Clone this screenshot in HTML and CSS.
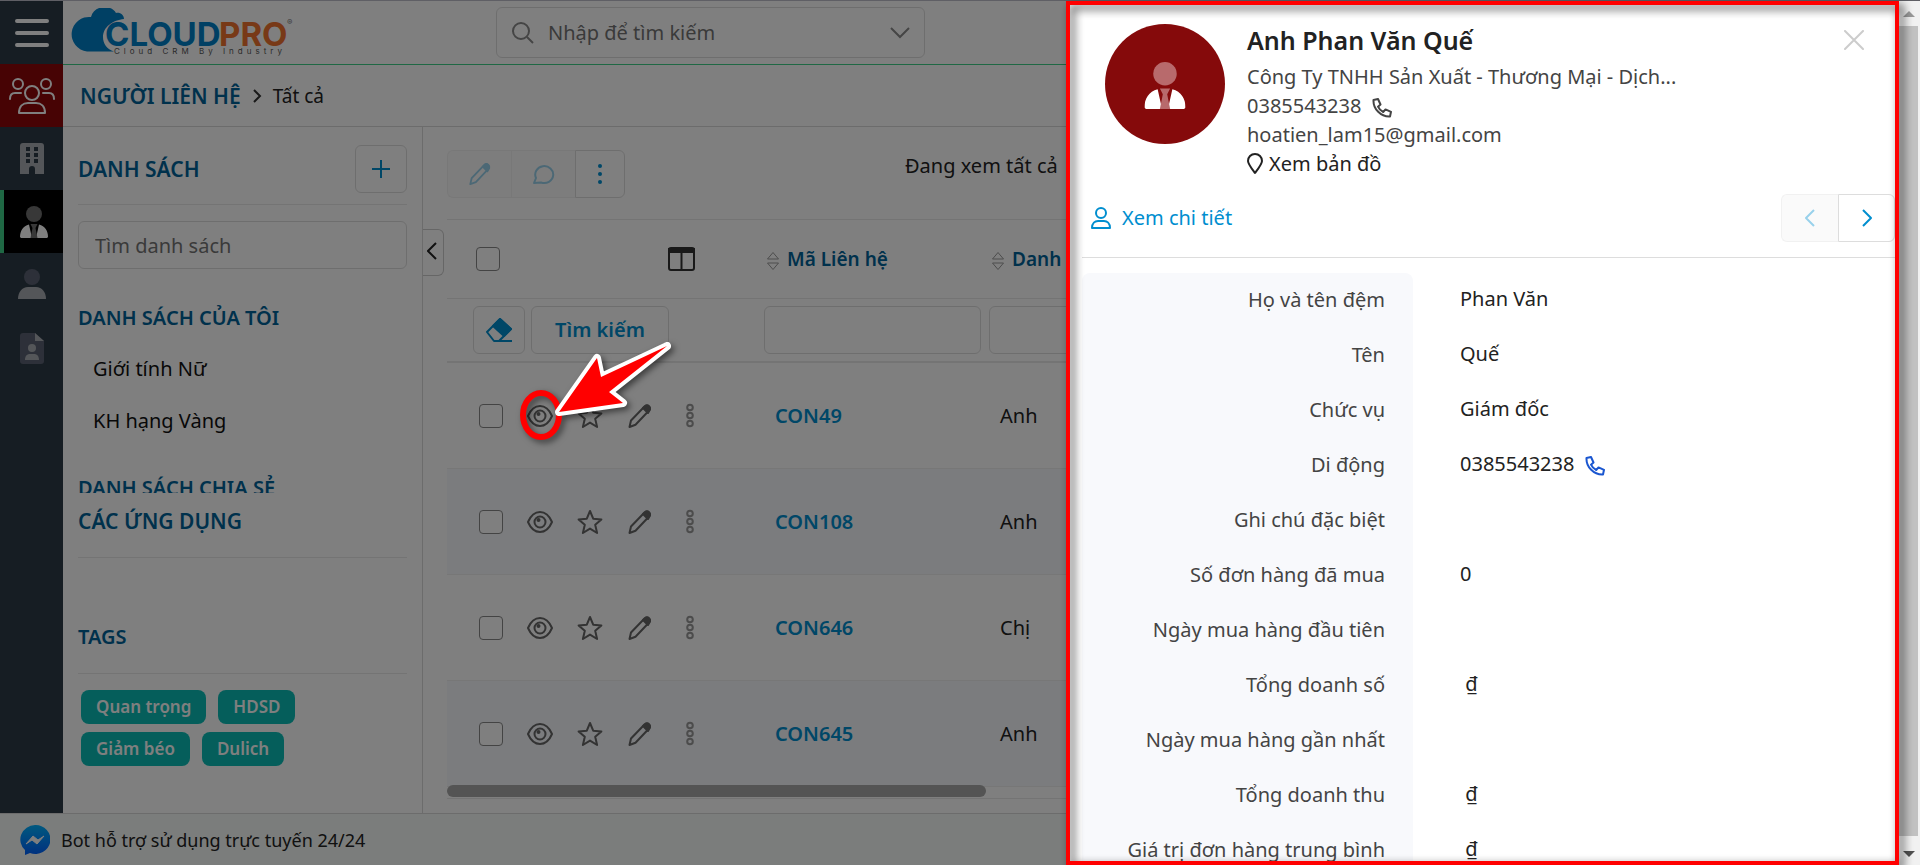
FILE: index.html
```html
<!DOCTYPE html>
<html lang="vi">
<head>
  <meta charset="UTF-8">
  <meta name="viewport" content="width=device-width, initial-scale=1.0">
  <title>CloudPro CRM - Người liên hệ</title>
  <link rel="stylesheet" href="styles.css">
</head>
<body>
  <!-- icons -->
  <svg class="sprite" aria-hidden="true">
    <symbol id="i-eye" viewBox="0 0 26 26">
      <path d="M1 13C4 6 8 3 13 3s9 3 12 10c-3 7-7 10-12 10S4 20 1 13z"/>
      <circle cx="13" cy="13" r="5.5"/>
      <circle cx="11.500" cy="11" r="2" fill="currentColor" stroke="none"/>
    </symbol>
    <symbol id="i-star" viewBox="0 0 26 26">
      <path d="M13 2l3.2 7.7 8.2.7-6.2 5.4 1.9 8.2-7.1-4.4L5.900 24l1.900-8.200L1.600 10.400l8.200-.7z"/>
    </symbol>
    <symbol id="i-pencil" viewBox="0 0 26 26">
      <path d="M2.500 24l1.500-6.500L17.500 3.500c1.500-1.500 3.200-1.500 4.500-.3s1.300 3-.2 4.600L8.500 21.800z"/>
      <path d="M16 5l5 5 2-3.500c.5-2-1.500-4.500-4-4z" fill="currentColor"/>
    </symbol>
    <symbol id="i-dots" viewBox="0 0 26 26">
      <circle cx="13" cy="4.500" r="2.800"/><circle cx="13" cy="12.500" r="2.800"/><circle cx="13" cy="20.500" r="2.800"/>
    </symbol>
    <symbol id="i-sort" viewBox="0 0 14 20">
      <path d="M7 1.500L12.500 8h-11zM7 18.500L12.500 12h-11z"/>
    </symbol>
    <symbol id="i-phone" viewBox="0 0 20 20">
      <path d="M1.500 2L6 1l2.500 5.500-2.500 2.200c1 2.200 2.800 4.200 5.200 5.300l2.300-2.600 5.500 2.400-1 4.700C9 19 1 11 1.500 2z"/>
    </symbol>
    <symbol id="i-suit" viewBox="0 0 28 32">
      <circle cx="14" cy="8" r="8" fill="var(--head)"/>
      <path d="M0 31c0-6 3-11 9-12.500L12 32H1zM28 31c0-6-3-11-9-12.500L16 32h11z" fill="#fff"/>
      <path d="M10.500 18h7l-2 4 2 10h-7l2-10z" fill="var(--head)"/>
    </symbol>
  </svg>

  <div class="app">
    <div class="workspace">
      <nav class="rail">
        <button class="rail-item" aria-label="Menu">
          <svg width="36" height="30" fill="none" stroke="#fff" stroke-width="4" stroke-linecap="round"><path d="M3 3h30M3 15h30M3 27h30"/></svg>
        </button>
        <a class="rail-item rail-red" href="#" aria-label="Khách hàng">
          <svg width="46" height="38" fill="none" stroke="#fff" stroke-width="2" stroke-linecap="round" stroke-linejoin="round">
            <circle cx="9" cy="7" r="5"/><circle cx="37" cy="7" r="5"/><circle cx="23" cy="16" r="7"/>
            <path d="M1 22c0-4 2-6 5-6h6M45 22c0-4-2-6-5-6h-6M10 36c0-7 4-10 9-10h8c5 0 9 3 9 10z"/>
          </svg>
        </a>
        <a class="rail-item" href="#" aria-label="Công ty">
          <svg width="24" height="32">
            <path d="M3 0h18a3 3 0 0 1 3 3v28h-9v-5a3 3 0 0 0-6 0v5H0V3a3 3 0 0 1 3-3z" fill="#a9adb2"/>
            <path d="M6 4h4v4H6zM14 4h4v4h-4zM6 10h4v4H6zM14 10h4v4h-4zM6 16h4v4H6zM14 16h4v4h-4z" fill="#2c3a46"/>
          </svg>
        </a>
        <a class="rail-item rail-active" href="#" aria-label="Người liên hệ">
          <svg width="28" height="32"><use href="#i-suit"/></svg>
        </a>
        <a class="rail-item" href="#" aria-label="Cá nhân">
          <svg width="28" height="32">
            <circle cx="14" cy="8" r="8" fill="#5a6172"/>
            <path d="M0 30c0-7 4-12 10-12h8c6 0 10 5 10 12z" fill="#a9adb2"/>
          </svg>
        </a>
        <a class="rail-item" href="#" aria-label="Hồ sơ">
          <svg width="24" height="32">
            <path d="M3 1h12l9 8v20a3 3 0 0 1-3 3H3a3 3 0 0 1-3-3V4a3 3 0 0 1 3-3z" fill="#5a6172"/>
            <path d="M15 1l9 8h-9zM5 28c0-4 2-6 5-6h4c3 0 5 2 5 6z" fill="#a9adb2"/>
            <circle cx="12" cy="16" r="4" fill="#a9adb2"/>
          </svg>
        </a>
      </nav>

      <div class="content">
        <header class="topbar">
          <a class="logo" href="#" aria-label="CloudPro">
            <svg width="225" height="50" viewBox="0 0 225 50">
              <path d="M17 43.500A17 17 0 1 1 21 9C24-3 41-4 46 5c4-1 8 2 8 6C43 12 33 19 33 29c0 7 4 12 11 14.500z" fill="#0080c8"/>
              <text x="35" y="38" font-size="33" font-weight="700" fill="#0080c8">CLOUD</text>
              <text x="149" y="38" font-size="33" font-weight="700" fill="#f0722e">PRO</text>
              <text x="217" y="17" font-size="8" fill="#777">®</text>
              <text class="slogan" x="44" y="46" font-size="8" fill="#555">Cloud CRM By Industry</text>
            </svg>
          </a>
          <label class="search">
            <svg width="24" height="24" fill="none" stroke="#8a8a8a" stroke-width="2"><circle cx="10" cy="10" r="8"/><path d="M16 16l6 6"/></svg>
            <input type="text" placeholder="Nhập để tìm kiếm" aria-label="Tìm kiếm">
            <svg width="20" height="12" fill="none" stroke="#8a8a8a" stroke-width="2"><path d="M1 1l9 9 9-9"/></svg>
          </label>
        </header>

        <div class="crumbs">
          <a class="crumb-module" href="#">NGƯỜI LIÊN HỆ</a>
          <svg width="10" height="14" fill="none" stroke="#333" stroke-width="2"><path d="M2 1l6 6-6 6"/></svg>
          <span>Tất cả</span>
        </div>

        <div class="columns">
          <aside class="lists">
            <div class="lists-head">
              <h2>DANH SÁCH</h2>
              <button class="btn btn-icon" aria-label="Thêm danh sách">
                <svg width="18" height="18" fill="none" stroke="#008ecf" stroke-width="2"><path d="M9 0v18M0 9h18"/></svg>
              </button>
            </div>
            <input class="field" type="text" placeholder="Tìm danh sách" aria-label="Tìm danh sách">
            <div class="lists-scroll">
              <h3>DANH SÁCH CỦA TÔI</h3>
              <a href="#">Giới tính Nữ</a>
              <a href="#">KH hạng Vàng</a>
              <h3>DANH SÁCH CHIA SẺ</h3>
            </div>
            <h2 class="block-title apps-title">CÁC ỨNG DỤNG</h2>
            <h2 class="block-title tags-title">TAGS</h2>
            <div class="tags">
              <span class="tag">Quan trọng</span>
              <span class="tag">HDSD</span>
              <span class="tag">Giảm béo</span>
              <span class="tag">Dulich</span>
            </div>
          </aside>

          <main class="main">
            <button class="collapse" aria-label="Thu gọn">
              <svg width="10" height="18" fill="none" stroke="#222" stroke-width="2"><path d="M9 1L1 9l8 8"/></svg>
            </button>
            <div class="toolbar">
              <div class="btn-group">
                <button class="btn off" disabled aria-label="Sửa"><svg class="ico" width="24" height="24" viewBox="0 0 26 26"><use href="#i-pencil"/></svg></button>
                <button class="btn off" disabled aria-label="Bình luận">
                  <svg class="ico" width="24" height="22"><path d="M2 20l2-5a9 8.500 0 1 1 5 4.500L2 20z"/></svg>
                </button>
                <button class="btn more" aria-label="Thêm">
                  <svg width="4" height="20" fill="#008ecf"><circle cx="2" cy="2" r="2"/><circle cx="2" cy="10" r="2"/><circle cx="2" cy="18" r="2"/></svg>
                </button>
              </div>
              <p class="summary">Đang xem tất cả</p>
            </div>

            <table class="grid">
              <thead>
                <tr>
                  <th class="col-tools">
                    <div class="head-tools">
                      <input class="check" type="checkbox" aria-label="Chọn tất cả">
                      <svg width="27" height="24" fill="none" stroke="#333" stroke-width="2"><rect x="1" y="1" width="25" height="22" rx="2"/><path d="M13.500 3v20"/><path d="M1 2h25v3H1z" fill="#333"/></svg>
                    </div>
                  </th>
                  <th class="col-data"><svg class="sort" width="14" height="20"><use href="#i-sort"/></svg>Mã Liên hệ</th>
                  <th><svg class="sort" width="14" height="20"><use href="#i-sort"/></svg>Danh xưng</th>
                </tr>
                <tr class="filter">
                  <td>
                    <div class="filter-tools">
                      <button class="btn" aria-label="Xóa lọc">
                        <svg width="28" height="26" fill="none" stroke="#008ecf" stroke-width="2" stroke-linejoin="round"><path d="M2 15L15 2l11 10-12 12H9z"/><path d="M8 9l7-7 11 10-7 7z" fill="#008ecf"/><path d="M10 24h17"/></svg>
                      </button>
                      <button class="btn btn-find">Tìm kiếm</button>
                    </div>
                  </td>
                  <td><input class="field" type="text" aria-label="Lọc mã liên hệ"></td>
                  <td><input class="field field-short" type="text" aria-label="Lọc danh xưng"></td>
                </tr>
              </thead>
              <tbody>
                <tr>
                  <td>
                    <div class="row-tools">
                      <input class="check" type="checkbox" aria-label="Chọn CON49">
                      <button aria-label="Xem nhanh"><svg class="ico"><use href="#i-eye"/></svg></button>
                      <button aria-label="Theo dõi"><svg class="ico"><use href="#i-star"/></svg></button>
                      <button aria-label="Sửa"><svg class="ico"><use href="#i-pencil"/></svg></button>
                      <button class="dim" aria-label="Thêm"><svg class="ico"><use href="#i-dots"/></svg></button>
                    </div>
                  </td>
                  <td><a href="#">CON49</a></td>
                  <td>Anh</td>
                </tr>
                <tr>
                  <td>
                    <div class="row-tools">
                      <input class="check" type="checkbox" aria-label="Chọn CON108">
                      <button aria-label="Xem nhanh"><svg class="ico"><use href="#i-eye"/></svg></button>
                      <button aria-label="Theo dõi"><svg class="ico"><use href="#i-star"/></svg></button>
                      <button aria-label="Sửa"><svg class="ico"><use href="#i-pencil"/></svg></button>
                      <button class="dim" aria-label="Thêm"><svg class="ico"><use href="#i-dots"/></svg></button>
                    </div>
                  </td>
                  <td><a href="#">CON108</a></td>
                  <td>Anh</td>
                </tr>
                <tr>
                  <td>
                    <div class="row-tools">
                      <input class="check" type="checkbox" aria-label="Chọn CON646">
                      <button aria-label="Xem nhanh"><svg class="ico"><use href="#i-eye"/></svg></button>
                      <button aria-label="Theo dõi"><svg class="ico"><use href="#i-star"/></svg></button>
                      <button aria-label="Sửa"><svg class="ico"><use href="#i-pencil"/></svg></button>
                      <button class="dim" aria-label="Thêm"><svg class="ico"><use href="#i-dots"/></svg></button>
                    </div>
                  </td>
                  <td><a href="#">CON646</a></td>
                  <td>Chị</td>
                </tr>
                <tr>
                  <td>
                    <div class="row-tools">
                      <input class="check" type="checkbox" aria-label="Chọn CON645">
                      <button aria-label="Xem nhanh"><svg class="ico"><use href="#i-eye"/></svg></button>
                      <button aria-label="Theo dõi"><svg class="ico"><use href="#i-star"/></svg></button>
                      <button aria-label="Sửa"><svg class="ico"><use href="#i-pencil"/></svg></button>
                      <button class="dim" aria-label="Thêm"><svg class="ico"><use href="#i-dots"/></svg></button>
                    </div>
                  </td>
                  <td><a href="#">CON645</a></td>
                  <td>Anh</td>
                </tr>
              </tbody>
            </table>
            <div class="hscroll"><div class="hscroll-thumb"></div></div>
          </main>
        </div>
      </div>
    </div>

    <footer class="footer">
      <svg width="30" height="30" viewBox="0 0 30 30">
        <defs><linearGradient id="msg" x1="0" y1="0" x2="0" y2="1"><stop offset="0" stop-color="#00b2ff"/><stop offset="1" stop-color="#0060ff"/></linearGradient></defs>
        <path d="M15 0a15 14.500 0 1 1-5 28l-5 2v-5A15 14.500 0 0 1 15 0z" fill="url(#msg)"/>
        <path d="M6 19l7-8 5 4 6-4-7 8-5-4z" fill="#fff" stroke="#fff" stroke-linejoin="round"/>
      </svg>
      <span>Bot hỗ trợ sử dụng trực tuyến 24/24</span>
    </footer>
  </div>

  <div class="scrim"></div>

  <div class="vscroll">
    <svg width="12" height="6" fill="#999"><path d="M0 6l6-6 6 6z"/></svg>
    <div class="vscroll-thumb"></div>
    <svg width="12" height="6" fill="#505050"><path d="M0 0l6 6 6-6z"/></svg>
  </div>

  <!-- quick preview -->
  <section class="drawer">
    <div class="person">
      <div class="avatar"><svg width="42" height="47" viewBox="0 0 28 32"><use href="#i-suit"/></svg></div>
      <div class="person-info">
        <h1>Anh Phan Văn Quế</h1>
        <p>Công Ty TNHH Sản Xuất - Thương Mại - Dịch...</p>
        <p>0385543238 <svg class="ico phone"><use href="#i-phone"/></svg></p>
        <p>hoatien_lam15@gmail.com</p>
        <p><a class="map" href="#"><svg class="ico" width="16" height="22"><path d="M8 1c4 0 7 3 7 7 0 3-4 8-7 12C5 16 1 11 1 8c0-4 3-7 7-7z"/></svg>Xem bản đồ</a></p>
      </div>
      <button class="close" aria-label="Đóng">
        <svg width="20" height="20" fill="none" stroke="#ccc" stroke-width="2" stroke-linecap="round"><path d="M1 1l18 18M19 1L1 19"/></svg>
      </button>
    </div>

    <div class="drawer-bar">
      <a class="detail" href="#">
        <svg class="ico" width="20" height="22"><circle cx="10" cy="6" r="5"/><path d="M1 21c0-5 3-7 6-7h6c3 0 6 2 6 7z"/></svg>
        Xem chi tiết
      </a>
      <div class="btn-group pager">
        <button class="btn off" disabled aria-label="Trước"><svg class="ico" width="12" height="18"><path d="M10 1L2 9l8 8"/></svg></button>
        <button class="btn" aria-label="Sau"><svg class="ico" width="12" height="18"><path d="M2 1l8 8-8 8"/></svg></button>
      </div>
    </div>

    <div class="details-wrap">
      <table class="details">
        <tr><th scope="row">Họ và tên đệm</th><td>Phan Văn</td></tr>
        <tr><th scope="row">Tên</th><td>Quế</td></tr>
        <tr><th scope="row">Chức vụ</th><td>Giám đốc</td></tr>
        <tr><th scope="row">Di động</th><td>0385543238 <svg class="ico phone blue"><use href="#i-phone"/></svg></td></tr>
        <tr><th scope="row">Ghi chú đặc biệt</th><td></td></tr>
        <tr><th scope="row">Số đơn hàng đã mua</th><td>0</td></tr>
        <tr><th scope="row">Ngày mua hàng đầu tiên</th><td></td></tr>
        <tr><th scope="row">Tổng doanh số</th><td>&nbsp;₫</td></tr>
        <tr><th scope="row">Ngày mua hàng gần nhất</th><td></td></tr>
        <tr><th scope="row">Tổng doanh thu</th><td>&nbsp;₫</td></tr>
        <tr><th scope="row">Giá trị đơn hàng trung bình</th><td>&nbsp;₫</td></tr>
      </table>
    </div>
  </section>

  <!-- guide marks: frame, ring and arrow -->
  <div class="mark-frame"></div>
  <svg class="mark-arrow" width="160" height="110" viewBox="0 0 160 110">
    <ellipse cx="23" cy="75" rx="18" ry="22" fill="none" stroke="#f00" stroke-width="6"/>
    <path d="M41 72L79 18l4 19L149 6 91 52l14 11z" fill="#f00" stroke="#fff" stroke-width="8" stroke-linejoin="round" paint-order="stroke"/>
  </svg>
</body>
</html>
```
FILE: styles.css
```css
* {
  box-sizing: border-box;
}
body {
  margin: 0;
  height: 100vh;
  overflow: hidden;
  border-top: 1px solid #5f5f65;
  font: 20px/30px "Segoe UI", "Noto Sans", sans-serif;
  color: #222;
  background: #fff;
}
h1, h2, h3, p {
  margin: 0;
}
a {
  color: #008ecf;
  text-decoration: none;
}
button, input {
  font: inherit;
  color: inherit;
}
button {
  padding: 0;
  border: 0;
  background: none;
}
svg {
  flex: none;
}
.sprite {
  position: absolute;
  width: 0;
  height: 0;
}
.ico {
  fill: none;
  stroke: currentColor;
  stroke-width: 2;
  stroke-linejoin: round;
}

/* common controls */
.btn {
  display: flex;
  align-items: center;
  justify-content: center;
  min-width: 52px;
  height: 48px;
  border: 1px solid #ddd;
  border-radius: 6px;
  background: #fff;
  color: #008ecf;
}
.btn.off {
  opacity: .4;
  background: #f5f5f5;
}
.btn-group {
  display: flex;
}
.btn-group .btn:not(:first-child) {
  border-top-left-radius: 0;
  border-bottom-left-radius: 0;
}
.btn-group .btn:not(:last-child) {
  border-right: 0;
  border-top-right-radius: 0;
  border-bottom-right-radius: 0;
}
.field {
  display: block;
  width: 100%;
  height: 48px;
  padding: 0 16px;
  border: 1px solid #ddd;
  border-radius: 6px;
  background: transparent;
}
::placeholder {
  color: #757575;
  opacity: 1;
}
.check {
  appearance: none;
  width: 24px;
  height: 24px;
  margin: 0;
  border: 1px solid #888;
  border-radius: 4px;
  background: #fff;
}

/* layout */
.app {
  display: flex;
  flex-direction: column;
  height: 100%;
  padding-right: 21px;
}
.workspace {
  flex: 1;
  display: flex;
  min-height: 0;
}
.content {
  flex: 1;
  display: flex;
  flex-direction: column;
  min-width: 0;
}
.columns {
  flex: 1;
  display: flex;
  min-height: 0;
}

/* left rail */
.rail {
  width: 63px;
  background: #2c3a46;
}
.rail-item {
  --head: #707070;
  display: flex;
  align-items: center;
  justify-content: center;
  width: 100%;
  height: 63px;
}
.rail-red {
  background: #8f0608;
}
.rail-active {
  border-left: 4px solid #3fd088;
  background: #000;
}

/* top */
.topbar {
  display: flex;
  align-items: center;
  gap: 201px;
  height: 64px;
  padding-left: 7px;
  border-bottom: 1px solid #3fd088;
}
.logo {
  height: 50px;
  font-family: Inter, sans-serif;
}
.slogan {
  letter-spacing: 4px;
}
.search {
  display: flex;
  align-items: center;
  gap: 11px;
  width: 429px;
  height: 51px;
  padding: 0 14px;
  border: 1px solid #ddd;
  border-radius: 6px;
}
.search input {
  flex: 1;
  min-width: 0;
  padding: 1px 2px;
  border: 0;
  background: none;
}
.crumbs {
  display: flex;
  align-items: center;
  gap: 11px;
  height: 62px;
  padding-left: 17px;
  border-bottom: 1px solid #d8d8d8;
  font-size: 19px;
}
.crumb-module {
  font-size: 21px;
  font-weight: 600;
  color: #006399;
}

/* lists */
.lists {
  width: 360px;
  padding: 0 15px;
  border-right: 1px solid #d8d8d8;
}
.lists h2, .lists h3 {
  font-size: 20px;
  font-weight: 600;
  color: #006399;
}
.lists h2 {
  font-size: 21px;
}
.lists-head {
  display: flex;
  align-items: center;
  justify-content: space-between;
  height: 78px;
  margin-bottom: 16px;
  padding-top: 7px;
  border-bottom: 1px solid #e8e8e8;
}
.lists-scroll {
  height: 204px;
  margin-top: 20px;
  overflow: hidden;
}
.lists-scroll h3 {
  padding: 14px 0;
}
.lists-scroll a {
  display: block;
  padding: 7px 15px 15px;
  color: #111;
}
.lists-scroll a + h3 {
  padding-top: 22px;
}
.lists .block-title {
  padding: 13px 0 21px;
  border-bottom: 1px solid #e8e8e8;
}
.lists .tags-title {
  font-size: 20px;
  margin-top: 51px;
}
.tags {
  display: flex;
  flex-wrap: wrap;
  gap: 8px 12px;
  width: 230px;
  margin: 16px 3px;
}
.tag {
  padding: 0 15px;
  border-radius: 8px;
  background: #0abcb6;
  color: #fff;
  font-size: 17px;
  font-weight: 600;
  line-height: 34px;
}

/* records */
.main {
  position: relative;
  flex: 1;
  min-width: 0;
  padding-left: 24px;
}
.collapse {
  position: absolute;
  left: 0;
  top: 102px;
  width: 21px;
  height: 47px;
  padding-right: 3px;
  border: 1px solid #ccc;
  border-left: 0;
  border-radius: 0 6px 6px 0;
}
.toolbar {
  display: flex;
  align-items: center;
  gap: 280px;
  height: 92px;
  padding-top: 2px;
}
.toolbar .btn {
  width: 64px;
}
.toolbar .more {
  width: 50px;
  min-width: 50px;
}
.summary {
  padding-bottom: 16px;
}
.grid {
  width: 100%;
  table-layout: fixed;
  border-collapse: separate;
  border-spacing: 0;
}
.col-tools {
  width: 313px;
}
.col-data {
  width: 225px;
}
.grid th {
  height: 80px;
  padding: 0 6px;
  border-top: 1px solid #e8e8e8;
  border-bottom: 1px solid #e8e8e8;
  text-align: left;
  font-size: 19px;
  font-weight: 600;
  color: #006399;
}
.sort {
  margin-right: 7px;
  vertical-align: middle;
  fill: none;
  stroke: #999;
}
.head-tools {
  display: flex;
  align-items: center;
  justify-content: space-between;
  padding: 0 59px 0 23px;
}
.filter td {
  height: 64px;
  padding: 0 4px;
  border-bottom: 2px solid #e8e8e8;
}
.filter-tools {
  display: flex;
  gap: 6px;
  padding-left: 22px;
}
.btn-find {
  width: 138px;
  font-weight: 600;
}
.filter .field-short {
  width: 216px;
}
.grid tbody td {
  height: 106px;
  padding: 0 15px;
  border-bottom: 1px solid #eee;
}
.grid tbody tr:nth-child(even) {
  background: #f6f8fc;
}
.grid tbody a {
  font-weight: 600;
}
.row-tools {
  display: flex;
  align-items: center;
  gap: 24px;
  padding-left: 17px;
}
.row-tools button, .row-tools .ico {
  display: block;
  width: 26px;
  height: 26px;
}
.row-tools button {
  color: #666;
}
.row-tools .dim {
  color: #999;
}
.hscroll {
  height: 14px;
  margin-top: -2px;
  border-bottom: 1px solid #e8e8e8;
}
.hscroll-thumb {
  position: relative;
  width: 539px;
  height: 12px;
  border-radius: 6px;
  background: #a8a8a8;
}
.footer {
  display: flex;
  align-items: center;
  gap: 11px;
  height: 52px;
  padding: 0 20px;
  border-top: 1px solid #d8d8d8;
  background: #f6faf8;
  font-size: 18px;
}

/* layers over the page */
.scrim {
  position: fixed;
  inset: 1px 21px 0 0;
  background: rgba(0, 0, 0, .5);
}
.vscroll {
  position: fixed;
  top: 1px;
  right: 0;
  bottom: 0;
  width: 21px;
  display: flex;
  flex-direction: column;
  align-items: center;
  gap: 9px;
  padding: 10px 2px 8px 0;
  background: #f1f1f1;
}
.vscroll-thumb {
  flex: 1;
  width: 100%;
  margin-bottom: 6px;
  background: #c1c1c1;
}

/* drawer */
.drawer {
  position: fixed;
  top: 1px;
  right: 21px;
  bottom: 0;
  width: 833px;
  display: flex;
  flex-direction: column;
  overflow: hidden;
  background: #fff;
}
.person {
  display: flex;
  gap: 22px;
  height: 181px;
  padding: 23px 35px 0 39px;
}
.avatar {
  --head: #b86a6c;
  display: flex;
  align-items: center;
  justify-content: center;
  width: 120px;
  height: 120px;
  padding-top: 2px;
  border-radius: 50%;
  background: #850a0b;
}
.person-info {
  flex: 1;
  line-height: 29px;
  color: #444;
}
.person-info h1 {
  font-size: 25px;
  font-weight: 600;
  line-height: 32px;
  margin-bottom: 6px;
  color: #222;
}
.phone {
  width: 20px;
  height: 20px;
  margin-left: 5px;
  vertical-align: middle;
}
.blue {
  color: #1a56d0;
}
.map {
  display: flex;
  align-items: center;
  gap: 6px;
  color: #222;
}
.close {
  align-self: flex-start;
  margin-top: 6px;
  height: 20px;
}
.close svg {
  display: block;
}
.drawer-bar {
  display: flex;
  align-items: center;
  justify-content: space-between;
  height: 76px;
  margin-left: 16px;
  padding: 0 4px 4px 9px;
  border-bottom: 1px solid #ddd;
}
.detail {
  display: flex;
  align-items: center;
  gap: 11px;
}
.pager .btn {
  width: 57px;
}
.details-wrap {
  flex: 1;
  min-height: 0;
  margin: 15px 0 4px 16px;
  overflow: hidden;
}
.details {
  width: 100%;
  border-collapse: collapse;
}
.details th {
  width: 331px;
  height: 55px;
  padding: 0 28px 2px 0;
  background: #f8f9fc;
  text-align: right;
  font-weight: 400;
  color: #444;
}
.details td {
  padding: 0 0 3px 47px;
}
.details tr:first-child th {
  border-top-right-radius: 8px;
  border-top-left-radius: 8px;
}

/* guide marks */
.mark-frame {
  position: fixed;
  top: 1px;
  right: 21px;
  bottom: 0;
  width: 833px;
  border: 4px solid #f00;
  filter: drop-shadow(4px 4px 5px rgba(0, 0, 0, .8));
}
.mark-arrow {
  position: absolute;
  left: 518px;
  top: 340px;
  filter: drop-shadow(3px 3px 3px rgba(0, 0, 0, .5));
}
```
